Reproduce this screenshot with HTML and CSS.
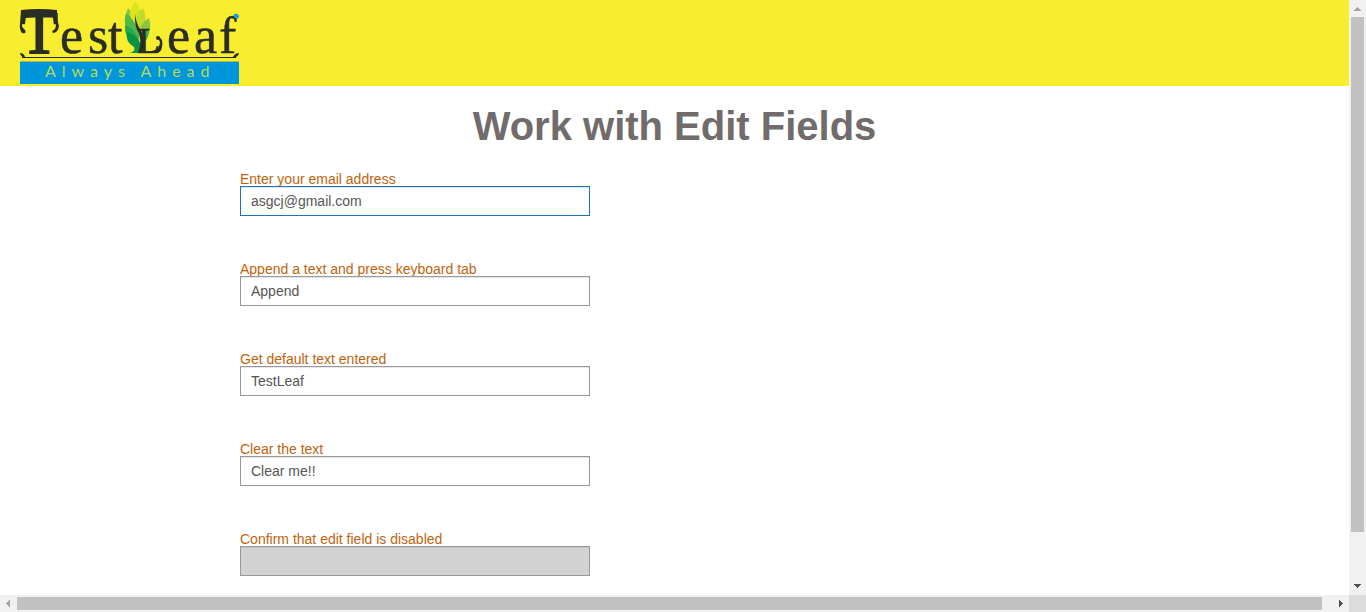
FILE: index.html
```html
<!DOCTYPE html>
<html lang="en">
<head>
<meta charset="utf-8">
<title>Work with Edit Fields</title>
<link rel="stylesheet" href="styles.css">
</head>
<body>
<div class="viewport">
  <div class="page">
    <header class="header">
      <svg class="logo" viewBox="20 0 219 84" role="img" aria-label="TestLeaf, Always Ahead">
        <path fill="#8cc63f" d="M128 8 Q123 17 130 26 L138 32 Q138 18 128 8Z"/>
        <path fill="#dce51c" d="M136 1 Q128 9 131 19 L138 30 Q144 13 136 1Z"/>
        <path fill="#c3da2c" d="M143 8 Q135 12 136 27 L140 34 Q149 20 143 8Z"/>
        <path fill="#4fb848" d="M126 13 Q122 27 132 34 L139 43 Q141 26 126 13Z"/>
        <path fill="#8cc63f" d="M149 18 Q139 23 141 34 L143 42 Q153 33 149 18Z"/>
        <path fill="#22a84a" d="M125 25 Q124 37 133 42 L140 48 Q139 31 125 25Z"/>
        <path fill="#39b54a" d="M149 28 Q141 31 142 45 Q150 38 149 28Z"/>
        <path fill="#079346" d="M127 32 Q125 42 134 47 Q136 51 130 53 L142 53 Q142 37 127 32Z"/>
        <path fill="#292d25" d="M135 14 Q136 23 140 29 Q145 37 144 53 L138 53 Q142 43 139 34 Q134 25 135 14Z"/>
        <g fill="#292d25">
          <path d="M21 10 Q39 8 57 10 Q57 20 59 26 Q58 33 53 33 Q51 31 54 30 Q58 26 54 19 Q52 14 45 13 L33 13 Q25 14 23 20 Q20 26 25 30 Q27 34 22 33 Q19 29 20 24Z"/>
          <path d="M157 36 Q164 38 162 47 Q161 53 156 53 L139 53 L139 52 L152 51 Q160 49 160 42Z"/>
          <circle cx="158" cy="38" r="2"/>
          <path d="M20 53 Q24 53 25 57 Q21 58 20 53Z"/>
          <path d="M239 53 Q235 53 233 57 Q238 58 239 53Z"/>
        </g>
        <g class="logo-name">
          <text class="logo-initial" x="21" y="53">T</text>
          <text y="53" x="60 88 108">est</text>
          <text class="logo-leaf-l" y="53" x="138">L</text>
          <text y="53" x="167 194 219">eaf</text>
        </g>
        <path fill="#149ce3" d="M234 14 Q239 13 239 17 Q237 20 234 17Z"/>
        <path stroke="#292d25" fill="none" d="M22 57.500H236"/>
        <rect x="20" y="61" width="219" height="1" fill="#a9b455"/>
        <rect x="20" y="62" width="219" height="22" fill="#0096dc"/>
        <text class="logo-tagline" x="45" y="77">Always Ahead</text>
      </svg>
    </header>
    <main class="content">
      <h1 class="title">Work with Edit Fields</h1>
      <form class="fields">
        <div class="field">
          <label for="email">Enter your email address</label>
          <input class="active" id="email" type="text" value="asgcj@gmail.com">
        </div>
        <div class="field">
          <label for="append">Append a text and press keyboard tab</label>
          <input id="append" type="text" value="Append">
        </div>
        <div class="field">
          <label for="default">Get default text entered</label>
          <input id="default" type="text" value="TestLeaf">
        </div>
        <div class="field">
          <label for="clear">Clear the text</label>
          <input id="clear" type="text" value="Clear me!!">
        </div>
        <div class="field">
          <label for="disabled">Confirm that edit field is disabled</label>
          <input id="disabled" type="text" disabled>
        </div>
      </form>
    </main>
  </div>
  <div class="scroll scroll-y" aria-hidden="true">
    <svg class="arrow" viewBox="0 0 17 17"><path fill="#a3a3a3" d="M5 11L8.500 7L12 11Z"/></svg>
    <div class="track"><div class="thumb"></div></div>
    <svg class="arrow" viewBox="0 0 17 17"><path fill="#505050" d="M5 6H12L8.500 10Z"/></svg>
  </div>
  <div class="scroll scroll-x" aria-hidden="true">
    <svg class="arrow" viewBox="0 0 17 17"><path fill="#a3a3a3" d="M10 5V12L6 8.500Z"/></svg>
    <div class="track"><div class="thumb"></div></div>
    <svg class="arrow" viewBox="0 0 17 17"><path fill="#505050" d="M7 5V12L11 8.500Z"/></svg>
  </div>
  <div class="corner"></div>
</div>
</body>
</html>
```
FILE: styles.css
```css
* { box-sizing: border-box; }
body {
  margin: 0;
  background: #fff;
  font-family: "Liberation Sans", Arial, sans-serif;
  font-size: 14px;
}
.viewport {
  display: grid;
  grid-template: minmax(0, 1fr) 17px / minmax(0, 1fr) 17px;
  height: 100vh;
}
.page { overflow: hidden; }
.header {
  padding: 0 20px 2px;
  background: #f8ee2f;
}
.logo {
  display: block;
  width: 219px;
  overflow: visible;
}
.logo-name {
  font-family: "Liberation Serif", "Times New Roman", serif;
  font-size: 52px;
  fill: #292d25;
  stroke: #292d25;
  stroke-width: 0.5;
}
.logo-initial {
  font-size: 60px;
  stroke-width: 2;
}
.logo-leaf-l { font-size: 36px; }
.logo-tagline {
  font-family: Lato, sans-serif;
  font-size: 16px;
  letter-spacing: 6px;
  fill: #b5dc58;
}
.content { padding: 17px 240px 0; }
.title {
  margin: 0 0 23px;
  color: #716b6b;
  font-size: 40px;
  line-height: 46px;
  text-align: center;
}
.fields {
  display: flex;
  flex-direction: column;
  gap: 46px;
}
.field {
  display: flex;
  flex-direction: column;
  align-items: flex-start;
}
.field label {
  color: #c1630c;
  line-height: 14px;
}
.field input {
  width: 350px;
  height: 30px;
  padding: 0 10px;
  border: 1px solid #999;
  border-radius: 0;
  background: #fff;
  box-shadow: inset 0 1px 1px #e4e4e4;
  color: #555;
  font: inherit;
}
.field input.active { border-color: #1f73b4; }
.field input:disabled {
  background: #d3d3d3;
  box-shadow: inset 0 1px 1px #c2c2c2;
}
.scroll {
  display: flex;
  background: #f1f1f1;
}
.arrow {
  flex: none;
  width: 17px;
  height: 17px;
  shape-rendering: crispEdges;
}
.track {
  display: flex;
  flex: 1;
}
.thumb { background: #c1c1c1; }
.scroll-y, .scroll-y .track { flex-direction: column; }
.scroll-y .track { padding: 0 2px; }
.scroll-y .thumb { height: 91.800%; }
.scroll-x .track { padding: 2px 0; }
.scroll-x .thumb { width: 99.250%; }
.corner { background: #dcdcdc; }
```
